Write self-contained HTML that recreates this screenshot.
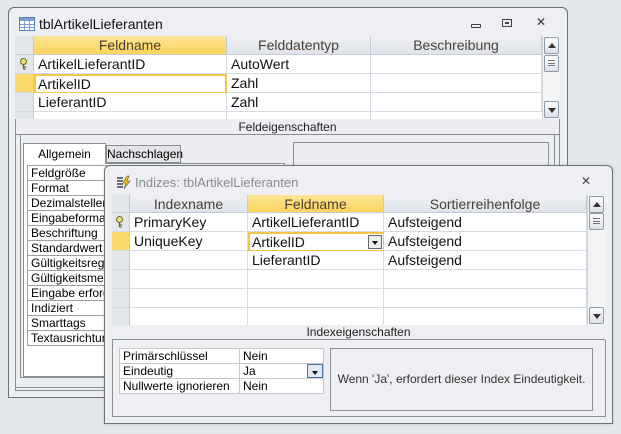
<!DOCTYPE html>
<html><head><meta charset="utf-8"><style>
*{margin:0;padding:0;box-sizing:border-box}
body{width:621px;height:434px;background:#e4e7ec;position:relative;overflow:hidden;font-family:"Liberation Sans",sans-serif;}
.a{position:absolute}
.win{position:absolute;background:#edeff2;border:1px solid #6f7277;border-radius:6px 6px 0 0}
.hdr{position:absolute;background:linear-gradient(#eef0f4,#dfe3ea);border-right:1px solid #c5cbd4;border-bottom:1px solid #c5cbd4;color:#4b3f33;font-size:14px;text-align:center;line-height:19px}
.hy{background:linear-gradient(#fee697,#fcd35a)}
.cell{position:absolute;background:#fff;border-right:1px solid #d3dbe6;border-bottom:1px solid #d3dbe6;font-size:14px;line-height:19px;padding-left:4px;color:#111}
.sel{position:absolute;background:#e3e6eb;border-bottom:1px solid #d3dbe6;border-right:1px solid #c5cbd4}
.lab{position:absolute;background:#fff;border:1px solid #a0a0a0;font-size:12px;line-height:14px;padding-left:3px;color:#000;white-space:nowrap;overflow:hidden}
.sb{position:absolute;background:#f3f4f6;border-left:1px solid #d0d4da}
.btn{position:absolute;width:15px;height:17px;border:1px solid #8e99a8;border-radius:2px;background:linear-gradient(#fafbfc,#dde2e8)}
</style></head><body>

<!-- back window -->
<div class="win" style="left:8px;top:7px;width:560px;height:391px"></div>
<div class="a" style="left:15px;top:36px;width:545px;height:355px;border:1px solid #8a8f96;border-top:none;background:#eceef1"></div>
<svg class="a" style="left:19px;top:17px" width="16" height="14"><rect x="0.5" y="0.5" width="15" height="13" fill="#fff" stroke="#5a7fb5"/><rect x="1" y="1" width="14" height="3" fill="#7d9fd2"/><path d="M1 7.5H15M1 10.5H15M5.5 4V13M10.5 4V13" stroke="#7d9fd2"/></svg>
<div class="a" style="left:39px;top:16px;font-size:14px;color:#111">tblArtikelLieferanten</div>
<div class="a" style="left:471px;top:24px;width:10px;height:4px;border:1px solid #444;border-radius:1px"></div>
<div class="a" style="left:502px;top:19px;width:10px;height:8px;border:1px solid #444"><div class="a" style="left:2px;top:2px;width:4px;height:2px;border:1px solid #444"></div></div>
<div class="a" style="left:536px;top:15px;font-size:12px;color:#333">✕</div>

<div class="a" style="left:15px;top:36px;width:545px;height:83px;background:#fff"></div>
<div class="hdr" style="left:15px;top:36px;width:19px;height:19px;background:#e3e6eb"></div>
<div class="hdr hy" style="left:34px;top:36px;width:193px;height:19px">Feldname</div>
<div class="hdr" style="left:227px;top:36px;width:144px;height:19px">Felddatentyp</div>
<div class="hdr" style="left:371px;top:36px;width:171px;height:19px">Beschreibung</div>
<div class="sel" style="left:15px;top:55px;width:19px;height:19px"></div>
<svg class="a" style="left:19px;top:58px" width="9" height="12"><circle cx="4.5" cy="3.5" r="3" fill="#e8e07a" stroke="#6b6a20"/><path d="M4.5 6.5V11M4.5 9H7M4.5 11H6.5" stroke="#6b6a20" stroke-width="1.3"/></svg>
<div class="sel" style="left:15px;top:74px;width:19px;height:19px;background:#fdd86a"></div>
<div class="sel" style="left:15px;top:93px;width:19px;height:19px"></div>
<div class="sel" style="left:15px;top:112px;width:19px;height:7px;border-bottom:none"></div>
<div class="cell" style="left:34px;top:55px;width:193px;height:19px">ArtikelLieferantID</div>
<div class="cell" style="left:227px;top:55px;width:144px;height:19px">AutoWert</div>
<div class="cell" style="left:371px;top:55px;width:171px;height:19px"></div>
<div class="cell" style="left:34px;top:74px;width:193px;height:20px;border:2px solid #f3c647;padding-left:2px;line-height:17px">ArtikelID</div>
<div class="cell" style="left:227px;top:74px;width:144px;height:19px">Zahl</div>
<div class="cell" style="left:371px;top:74px;width:171px;height:19px"></div>
<div class="cell" style="left:34px;top:93px;width:193px;height:19px">LieferantID</div>
<div class="cell" style="left:227px;top:93px;width:144px;height:19px">Zahl</div>
<div class="cell" style="left:371px;top:93px;width:171px;height:19px"></div>
<div class="cell" style="left:34px;top:112px;width:193px;height:7px;border-bottom:none"></div>
<div class="cell" style="left:227px;top:112px;width:144px;height:7px;border-bottom:none"></div>
<div class="sb" style="left:542px;top:36px;width:18px;height:83px"></div>
<div class="btn" style="left:544px;top:37px"><div class="a" style="left:3px;top:5px;border:4px solid transparent;border-bottom:5px solid #333;border-top:none"></div></div>
<div class="btn" style="left:544px;top:55px"><div class="a" style="left:3px;top:4px;width:7px;height:6px;border-top:1px solid #777;border-bottom:1px solid #777"></div><div class="a" style="left:3px;top:7px;width:7px;border-top:1px solid #777"></div></div>
<div class="btn" style="left:544px;top:101px"><div class="a" style="left:3px;top:6px;border:4px solid transparent;border-top:5px solid #333;border-bottom:none"></div></div>
<div class="a" style="left:15px;top:119px;width:545px;height:16px;border-bottom:1px solid #8a8f96;font-size:12px;color:#222;text-align:center;line-height:16px">Feldeigenschaften</div>

<div class="a" style="left:15px;top:135px;width:545px;height:253px;border-bottom:1px solid #8a8f96"></div>
<div class="a" style="left:20px;top:135px;width:535px;height:243px;border:1px solid #8a8f96;border-top:none"></div>
<div class="a" style="left:23px;top:163px;width:262px;height:214px;border:1px solid #8a8f96;background:#fff"></div>
<div class="a" style="left:23px;top:143px;width:83px;height:21px;background:#fff;border:1px solid #8a8f96;border-bottom:none;font-size:12px;text-align:center;line-height:20px">Allgemein</div>
<div class="a" style="left:106px;top:145px;width:75px;height:18px;background:#e2e4e8;border:1px solid #8a8f96;font-size:12px;text-align:center;line-height:17px">Nachschlagen</div>
<div class="a" style="left:27px;top:165px;width:260px;height:181px">
<div class="lab" style="left:0;top:0;width:80px;height:16px">Feldgröße</div>
<div class="lab" style="left:0;top:15px;width:80px;height:16px">Format</div>
<div class="lab" style="left:0;top:30px;width:80px;height:16px">Dezimalstellenanzeige</div>
<div class="lab" style="left:0;top:45px;width:80px;height:16px">Eingabeformat</div>
<div class="lab" style="left:0;top:60px;width:80px;height:16px">Beschriftung</div>
<div class="lab" style="left:0;top:75px;width:80px;height:16px">Standardwert</div>
<div class="lab" style="left:0;top:90px;width:80px;height:16px">Gültigkeitsregel</div>
<div class="lab" style="left:0;top:105px;width:80px;height:16px">Gültigkeitsmeldung</div>
<div class="lab" style="left:0;top:120px;width:80px;height:16px">Eingabe erforderlich</div>
<div class="lab" style="left:0;top:135px;width:80px;height:16px">Indiziert</div>
<div class="lab" style="left:0;top:150px;width:80px;height:16px">Smarttags</div>
<div class="lab" style="left:0;top:165px;width:80px;height:16px">Textausrichtung</div>
</div>
<div class="a" style="left:293px;top:142px;width:256px;height:60px;border:1px solid #8a8f96"></div>

<!-- index window -->
<div class="win" style="left:104px;top:165px;width:509px;height:259px;background:#edeff2;box-shadow:0 0 3px rgba(0,0,0,.15)"></div>
<svg class="a" style="left:116px;top:175px" width="16" height="15"><path d="M1 3H7M1 6H7M1 9H7M1 12H7" stroke="#222" stroke-width="1.3"/><path d="M11 1L7 8H10L8 14L14 6H11L13 1Z" fill="#f5c400" stroke="#555" stroke-width="0.6"/></svg>
<div class="a" style="left:135px;top:175px;font-size:13px;color:#8a8a8a">Indizes: tblArtikelLieferanten</div>
<div class="a" style="left:581px;top:174px;font-size:12px;color:#444">✕</div>

<div class="a" style="left:112px;top:195px;width:493px;height:130px;background:#fff"></div>
<div class="hdr" style="left:112px;top:195px;width:18px;height:18px;background:#e3e6eb"></div>
<div class="hdr" style="left:130px;top:195px;width:118px;height:18px;line-height:18px">Indexname</div>
<div class="hdr hy" style="left:248px;top:195px;width:136px;height:18px;line-height:18px">Feldname</div>
<div class="hdr" style="left:384px;top:195px;width:203px;height:18px;line-height:18px">Sortierreihenfolge</div>
<div class="sel" style="left:112px;top:213px;width:18px;height:19px"></div>
<svg class="a" style="left:115px;top:216px" width="9" height="12"><circle cx="4.5" cy="3.5" r="3" fill="#e8e07a" stroke="#6b6a20"/><path d="M4.5 6.5V11M4.5 9H7M4.5 11H6.5" stroke="#6b6a20" stroke-width="1.3"/></svg>
<div class="sel" style="left:112px;top:232px;width:18px;height:19px;background:#fdd86a"></div>
<div class="sel" style="left:112px;top:251px;width:18px;height:19px"></div>
<div class="sel" style="left:112px;top:270px;width:18px;height:19px"></div>
<div class="sel" style="left:112px;top:289px;width:18px;height:19px"></div>
<div class="sel" style="left:112px;top:308px;width:18px;height:17px;border-bottom:none"></div>
<div class="cell" style="left:130px;top:213px;width:118px;height:19px">PrimaryKey</div>
<div class="cell" style="left:248px;top:213px;width:136px;height:19px">ArtikelLieferantID</div>
<div class="cell" style="left:384px;top:213px;width:203px;height:19px">Aufsteigend</div>
<div class="cell" style="left:130px;top:232px;width:118px;height:19px">UniqueKey</div>
<div class="cell" style="left:248px;top:232px;width:137px;height:20px;border:2px solid #f3c647;padding-left:2px;line-height:17px">ArtikelID<div class="a" style="left:118px;top:1px;width:14px;height:14px;border:1px solid #666;background:#eee"><div class="a" style="left:3px;top:5px;border:3px solid transparent;border-top:4px solid #111;border-bottom:none"></div></div></div>
<div class="cell" style="left:384px;top:232px;width:203px;height:19px">Aufsteigend</div>
<div class="cell" style="left:130px;top:251px;width:118px;height:19px"></div>
<div class="cell" style="left:248px;top:251px;width:136px;height:19px">LieferantID</div>
<div class="cell" style="left:384px;top:251px;width:203px;height:19px">Aufsteigend</div>
<div class="cell" style="left:130px;top:270px;width:118px;height:19px"></div>
<div class="cell" style="left:248px;top:270px;width:136px;height:19px"></div>
<div class="cell" style="left:384px;top:270px;width:203px;height:19px"></div>
<div class="cell" style="left:130px;top:289px;width:118px;height:19px"></div>
<div class="cell" style="left:248px;top:289px;width:136px;height:19px"></div>
<div class="cell" style="left:384px;top:289px;width:203px;height:19px"></div>
<div class="cell" style="left:130px;top:308px;width:118px;height:17px;border-bottom:none"></div>
<div class="cell" style="left:248px;top:308px;width:136px;height:17px;border-bottom:none"></div>
<div class="cell" style="left:384px;top:308px;width:203px;height:17px;border-bottom:none"></div>
<div class="sb" style="left:587px;top:195px;width:18px;height:130px"></div>
<div class="btn" style="left:589px;top:196px"><div class="a" style="left:3px;top:5px;border:4px solid transparent;border-bottom:5px solid #333;border-top:none"></div></div>
<div class="btn" style="left:589px;top:213px"><div class="a" style="left:3px;top:4px;width:7px;height:6px;border-top:1px solid #777;border-bottom:1px solid #777"></div><div class="a" style="left:3px;top:7px;width:7px;border-top:1px solid #777"></div></div>
<div class="btn" style="left:589px;top:307px"><div class="a" style="left:3px;top:6px;border:4px solid transparent;border-top:5px solid #333;border-bottom:none"></div></div>
<div class="a" style="left:112px;top:325px;width:493px;height:15px;border-bottom:1px solid #8a8f96;font-size:12px;color:#222;text-align:center;line-height:15px">Indexeigenschaften</div>
<div class="a" style="left:112px;top:340px;width:494px;height:77px;border:1px solid #8a8f96;border-top:none"></div>

<div class="lab" style="left:119px;top:348px;width:121px;height:16px;border-color:#c8c8c8">Primärschlüssel</div>
<div class="lab" style="left:239px;top:348px;width:85px;height:16px;border-color:#c8c8c8">Nein</div>
<div class="lab" style="left:119px;top:363px;width:121px;height:16px;border-color:#c8c8c8">Eindeutig</div>
<div class="lab" style="left:239px;top:363px;width:85px;height:16px;border-color:#c8c8c8">Ja</div>
<div class="a" style="left:307px;top:364px;width:16px;height:14px;border:1px solid #4a6fa5;background:#dfe8f5"><div class="a" style="left:4px;top:6px;border:3px solid transparent;border-top:4px solid #111;border-bottom:none"></div></div>
<div class="lab" style="left:119px;top:378px;width:121px;height:16px;border-color:#c8c8c8">Nullwerte ignorieren</div>
<div class="lab" style="left:239px;top:378px;width:85px;height:16px;border-color:#c8c8c8">Nein</div>
<div class="a" style="left:330px;top:348px;width:263px;height:63px;border:1px solid #8a8f96;font-size:12px;color:#333;text-align:center;line-height:61px">Wenn 'Ja', erfordert dieser Index Eindeutigkeit.</div>
</body></html>
